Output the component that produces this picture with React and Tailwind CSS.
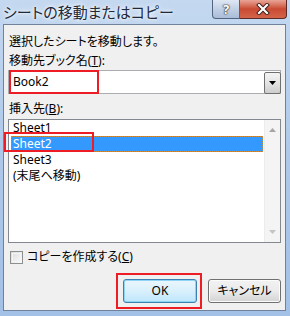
export default function App() {
  const font = "[font-family:'Noto_Sans','Noto_Sans_CJK_JP',sans-serif] [font-feature-settings:'palt']";

  return (
    <div className={`w-[290px] h-[316px] flex flex-col pl-[3px] pr-[4px] pb-[5px] bg-gradient-to-b from-[#c4d8f0] via-[#adc8ea] to-[#a3c0e6] text-[#000] ${font}`}>
      {/* Title bar */}
      <div className="h-[24px] flex items-start">
        <span className="pt-[2px] text-[15px] leading-[20px] text-[#1e2a3a] [text-shadow:0_0_6px_#fff,0_0_3px_#fff]">
          シートの移動またはコピー
        </span>
        <div className="ml-auto -mr-[1px] flex h-[19px]">
          <div className="w-[28px] h-full flex items-center justify-center border border-[#52647e] border-t-0 rounded-bl-[4px] bg-gradient-to-b from-[#dfe7f3] via-[#c2d0e5] to-[#a9bcd8]">
            <span className="text-[13px] leading-none font-bold text-white [text-shadow:0_0_1px_#333,0_0_1px_#333,0_0_2px_#333]">?</span>
          </div>
          <div className="w-[47px] h-full flex items-center justify-center border border-[#5b2a24] border-t-0 border-l-0 rounded-br-[4px] bg-gradient-to-b from-[#e8a597] via-[#c94a32] to-[#d3644a]">
            <svg width="14" height="12" viewBox="0 0 14 12">
              <path d="M3 2 L11 10 M11 2 L3 10" stroke="#3a1a16" strokeWidth="4" strokeLinecap="square" />
              <path d="M3 2 L11 10 M11 2 L3 10" stroke="#fff" strokeWidth="2.2" strokeLinecap="square" />
            </svg>
          </div>
        </div>
      </div>

      {/* Client area */}
      <div className="flex-1 flex flex-col border border-[#6f8299] bg-[#f0f0f0] pt-[7px] pl-[4px] pr-[4px] text-[12px]">
        <div className="h-[19px] leading-[19px] pl-[1px]">選択したシートを移動します。</div>
        <div className="h-[19px] leading-[19px] pl-[1px]">
          移動先ブック名(<span className="underline">T</span>):
        </div>

        {/* Combo box */}
        <div className="relative h-[24px] flex border border-[#abadb3] bg-white">
          <div className="flex-1 pl-[4px] leading-[22px]">Book2</div>
          <div className="w-[17px] mt-[1px] -mb-[1px] -mr-[1px] flex items-center justify-center border border-[#707070] rounded-[2px] bg-gradient-to-b from-[#f4f4f4] via-[#e4e4e4] to-[#cdcdcd]">
            <svg width="7" height="4" viewBox="0 0 7 4">
              <path d="M0 0 H7 L3.5 4 Z" fill="#000" />
            </svg>
          </div>
          <div className="absolute left-0 -top-px w-[90px] h-[24px] border-2 border-[#ee1c24]" />
        </div>

        <div className="mt-[5px] h-[19px] leading-[19px] pl-[1px]">
          挿入先(<span className="underline">B</span>):
        </div>

        {/* List box */}
        <div className="relative mt-[1px] h-[124px] flex border border-[#828790] bg-white">
          <div className="flex-1 pl-[2px] pr-[1px]">
            <div className="h-[16px] leading-[16px] px-[2px]">Sheet1</div>
            <div className="h-[16px] leading-[14px] px-[1px] bg-[#3399ff] text-white border border-dotted border-[#cc8a3a]">Sheet2</div>
            <div className="h-[16px] leading-[16px] px-[2px]">Sheet3</div>
            <div className="h-[16px] leading-[16px] px-[2px]">(末尾へ移動)</div>
          </div>
          <div className="w-[16px] flex flex-col items-center justify-between py-[8px] bg-[#f4f4f4] border-l border-[#ececec]">
            <svg width="7" height="4" viewBox="0 0 7 4">
              <path d="M0 4 H7 L3.5 0 Z" fill="#a6a6a6" />
            </svg>
            <svg width="7" height="4" viewBox="0 0 7 4">
              <path d="M0 0 H7 L3.5 4 Z" fill="#c4c4c4" />
            </svg>
          </div>
          <div className="absolute -left-[5px] top-[12px] w-[90px] h-[20px] border-2 border-[#ee1c24]" />
        </div>

        {/* Checkbox */}
        <div className="mt-[5px] h-[18px] flex items-center gap-[4px] pl-[2px]">
          <div className="w-[13px] h-[13px] border border-[#8e8f8f] bg-gradient-to-br from-[#dcdcdc] to-[#fbfbfb] p-[1px]">
            <div className="w-full h-full border border-[#f4f4f4]" />
          </div>
          <span className="leading-[18px]">
            コピーを作成する(<span className="underline">C</span>)
          </span>
        </div>

        {/* Buttons */}
        <div className="mt-[13px] flex justify-end gap-[11px] pr-[0px]">
          <div className="relative">
            <div className="w-[74px] h-[24px] flex items-center justify-center rounded-[3px] border border-[#3c7fb1] bg-gradient-to-b from-[#eaf6fd] via-[#d9f0fc] to-[#bee6fd] shadow-[inset_0_0_0_1px_#8fd3f5]">
              OK
            </div>
            <div className="absolute -left-[7px] -top-[6px] -right-[5px] -bottom-[6px] border-2 border-[#ee1c24]" />
          </div>
          <div className="w-[73px] h-[24px] flex items-center justify-center rounded-[3px] border border-[#707070] bg-gradient-to-b from-[#f2f2f2] via-[#ebebeb] to-[#d3d3d3] shadow-[inset_0_0_0_1px_#fcfcfc]">
            キャンセル
          </div>
        </div>
      </div>
    </div>
  );
}
